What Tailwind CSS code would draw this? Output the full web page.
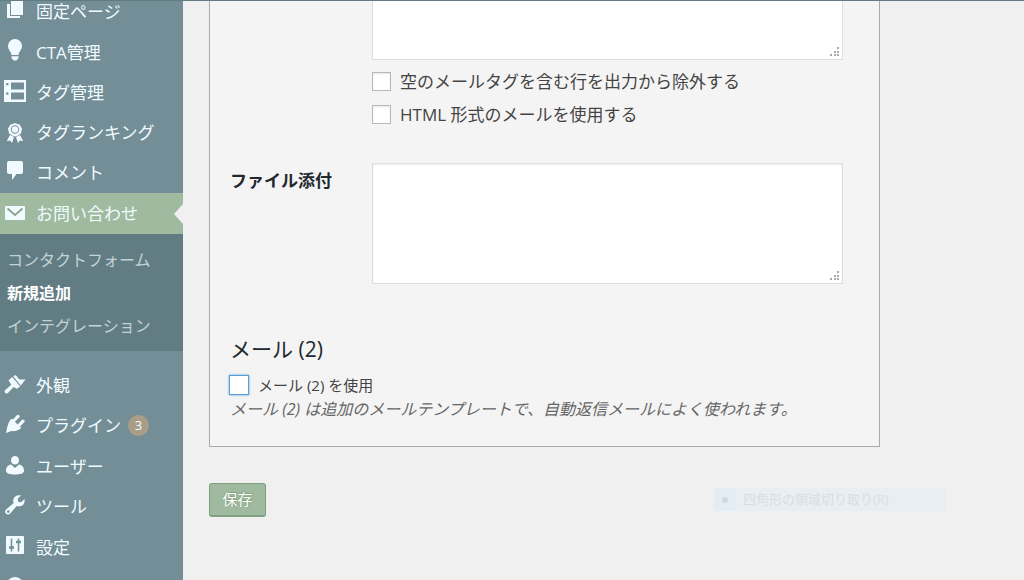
<!DOCTYPE html>
<html lang="ja">
<head>
  <meta charset="UTF-8">
  <meta name="viewport" content="width=device-width, initial-scale=1.0">
  <title>コンタクトフォーム - 新規追加</title>
  <script src="https://cdn.jsdelivr.net/npm/@tailwindcss/browser@4"></script>
</head>
<body class="bg-[#f0f0f0] h-screen overflow-hidden flex flex-col text-[17px] text-[#444] font-['Open_Sans','Noto_Sans_CJK_JP',sans-serif]">
  <header class="h-px shrink-0 bg-[#627c83]"></header>
  <div class="flex flex-1 min-h-0">

    <!-- Admin menu -->
    <nav class="w-[183px] shrink-0 bg-[#738e96] text-[#f1fbff] overflow-hidden">
      <div class="-mt-[9px] h-[201px] flex flex-col">
        <a href="#" class="flex-1 flex items-center gap-[11px] pl-[5px]">
          <svg class="size-5 -mt-1" viewBox="0 0 20 20" fill="currentColor"><path d="M6 1h12v14H6zM2 4h3v12h10v2H2z"/></svg>
          <span>固定ページ</span>
        </a>
        <a href="#" class="flex-1 flex items-center gap-[11px] pl-[5px]">
          <svg class="size-[22px] -mx-px -mt-1" viewBox="0 0 20 22" fill="currentColor"><path d="M10 0a7 7 0 0 1 7 7c0 3.600-3 5.500-3.500 9h-7C6 12.500 3 10.600 3 7a7 7 0 0 1 7-7zM6.500 17.200h7V19l-2 2.600h-3l-2-2.600z"/></svg>
          <span>CTA管理</span>
        </a>
        <a href="#" class="flex-1 flex items-center gap-[10px] pl-1">
          <svg class="size-[22px] -mt-1" viewBox="0 0 22 22"><path fill="currentColor" fill-rule="evenodd" d="M0 0h22v22H0zM7 2.500v7h13v-7zM7 12.500v7h13v-7zM2.200 3v2.200h2.200V3zM2.200 12.500v2.200h2.200v-2.200z"/></svg>
          <span>タグ管理</span>
        </a>
        <a href="#" class="flex-1 flex items-center gap-[11px] pl-[5px]">
          <svg class="size-5" viewBox="0 0 20 20" fill="currentColor"><path fill-rule="evenodd" d="M10 0l2.200 1 2.400.4 1 2.200 1.400 2-.5 2.400-.5 2.400-2 1.300-2 1.300-2 .6-2-.6-2-1.300-2-1.300L3.500 8 3 5.600l1.400-2 1-2.200L7.800 1zM10 2.300a4.200 4.200 0 1 0 0 8.400 4.200 4.200 0 0 0 0-8.400z"/><circle cx="10" cy="6.500" r="3.200"/><path d="M5 12l4 2-2 6-2-2.500-3.300.8zM15 12l-4 2 2 6 2-2.500 3.300.8z"/></svg>
          <span>タグランキング</span>
        </a>
        <a href="#" class="flex-1 flex items-center gap-[11px] pl-[5px]">
          <svg class="size-5 -mt-1" viewBox="0 0 20 20" fill="currentColor"><path d="M4 0h12a2 2 0 0 1 2 2v9a2 2 0 0 1-2 2h-4.500L7 19v-6H4a2 2 0 0 1-2-2V2a2 2 0 0 1 2-2z"/></svg>
          <span>コメント</span>
        </a>
      </div>

      <a href="#" class="relative h-[41px] bg-[#9fba9f] flex items-center gap-[11px] pl-[5px]">
        <svg class="size-5" viewBox="0 0 20 20"><path fill="currentColor" d="M1 2h18a1 1 0 0 1 1 1v12a1 1 0 0 1-1 1H1a1 1 0 0 1-1-1V3a1 1 0 0 1 1-1z"/><path fill="none" stroke="#8aa78d" stroke-width="2" d="M2.500 4.500L10 11l7.500-6.500"/></svg>
        <span>お問い合わせ</span>
        <span class="absolute right-0 top-[11px] border-y-[10px] border-y-transparent border-r-[9px] border-r-[#f0f0f0]"></span>
      </a>
      <div class="bg-[#627c83] py-[9px] pl-[7px] text-base text-[#c3d2d7]">
        <a href="#" class="h-[33px] flex items-center">コンタクトフォーム</a>
        <a href="#" class="h-[33px] flex items-center font-bold text-white">新規追加</a>
        <a href="#" class="h-[33px] flex items-center">インテグレーション</a>
      </div>

      <div class="mt-[14px] h-[243px] flex flex-col">
        <a href="#" class="flex-1 flex items-center gap-[10px] pl-1">
          <svg class="size-[22px]" viewBox="0 0 22 22" fill="currentColor"><path d="M9.300 2.200c1-1 2.400-1.300 3.400-.3.800 1 1.300 2.500 2.600 3.300 1.600.8 4.200 0 6.500.3-2 1.500-3 4-5.200 6z"/><path d="M4.500 6.200L8.200 3l8 9.500-3.400 2.300-3.200-1.800-5.400 5.700c-1.600 1.600-4.400.2-3.400-2.200L7.300 10.700z"/></svg>
          <span>外観</span>
        </a>
        <a href="#" class="flex-1 flex items-center gap-[11px] pl-[5px]">
          <svg class="size-5 -mt-1" viewBox="0 0 20 20" fill="currentColor"><path d="M6.500 4.500L16.300 14l-2.300 1.600c-2.500 1.400-4.700 1.800-7.500 1.400L1 19l1-5c.9-3.300 1.800-6.800 4.500-9.500z"/><path stroke="currentColor" stroke-width="3.200" stroke-linecap="round" d="M9.500 6L13 2.400M14.500 10.800L18 7.200"/></svg>
          <span>プラグイン</span>
          <span class="-ml-1 size-[21px] rounded-full bg-[#aa9d88] text-[13px] flex items-center justify-center">3</span>
        </a>
        <a href="#" class="flex-1 flex items-center gap-[11px] pl-[5px]">
          <svg class="size-5" viewBox="0 0 20 20" fill="currentColor"><ellipse cx="10" cy="4.300" rx="4" ry="4.300"/><path d="M6 8.500l4 3.500 4-3.500c3 .5 5 2.500 5 6.500 0 2.500-4 3.500-9 3.500S1 17.500 1 15c0-4 2-6 5-6.500z"/></svg>
          <span>ユーザー</span>
        </a>
        <a href="#" class="flex-1 flex items-center gap-[11px] pl-[5px]">
          <svg class="size-5 -mt-1" viewBox="0 0 20 20" fill="currentColor"><path fill-rule="evenodd" d="M16 .5l-3.300 3.300.5 3 3 .5L19.400 4c.9 3.500-.9 6.800-4.400 7.300-1.200.2-2.200 0-3.200-.4l-6.600 7.500c-1.200 1.300-3 1.400-4.200.3s-1.200-3 .1-4.200l7.600-6.400c-.5-1-.7-2-.5-3.200C8.700 1.500 12.200-.4 16 .5zM3.300 15.300a1.300 1.300 0 1 0 0 2.600 1.300 1.300 0 0 0 0-2.600z"/></svg>
          <span>ツール</span>
        </a>
        <a href="#" class="flex-1 flex items-center gap-[11px] pl-[5px]">
          <svg class="size-5 -mt-1" viewBox="0 0 20 20"><rect x="1" y="1" width="18" height="18" rx="1" fill="currentColor"/><path stroke="#738e96" stroke-width="1.500" d="M6.500 3.500v13M13.500 3.500v13"/><path stroke="#738e96" stroke-width="2.500" d="M4 12.500h5M11 7h5"/></svg>
          <span>設定</span>
        </a>
        <a href="#" aria-label="メニューを閉じる" class="flex-1 flex items-center pl-[5px]">
          <svg class="size-5 -mt-1" viewBox="0 0 20 20"><circle cx="10" cy="10" r="9" fill="currentColor"/><path fill="#738e96" d="M7.500 6l6 4-6 4z"/></svg>
        </a>
      </div>
    </nav>

    <!-- Mail tab -->
    <main class="flex-1 min-w-0 pl-[26px] pr-36">
      <form>
        <div class="bg-[#f4f4f4] border border-t-0 border-[#aaa] pl-5 pr-9 pb-[25px]">
          <div class="grid grid-cols-[142px_1fr]">
            <div></div>
            <div>
              <div class="relative">
                <textarea aria-label="メッセージ本文" class="block w-full h-[59px] resize-none bg-white border border-t-0 border-[#ddd] p-1"></textarea>
                <svg class="absolute right-[3px] bottom-[3px] size-[10px]" viewBox="0 0 10 10" fill="#aaa"><path d="M7 0h2v2H7zM4 4h2v2H4zM7 4h2v2H7zM0 7h2v2H0zM4 7h2v2H4zM7 7h2v2H7z"/></svg>
              </div>
              <label class="mt-[5px] h-[33px] flex items-center gap-[9px] whitespace-nowrap">
                <input type="checkbox" class="appearance-none size-[19px] shrink-0 bg-white border border-[#b4b9be] shadow-[inset_0_1px_2px_rgba(0,0,0,0.1)]">
                <span>空のメールタグを含む行を出力から除外する</span>
              </label>
              <label class="h-[33px] flex items-center gap-[9px] whitespace-nowrap">
                <input type="checkbox" class="appearance-none size-[19px] shrink-0 bg-white border border-[#b4b9be] shadow-[inset_0_1px_2px_rgba(0,0,0,0.1)]">
                <span>HTML 形式のメールを使用する</span>
              </label>
            </div>
          </div>

          <div class="mt-8 grid grid-cols-[142px_1fr]">
            <label for="attachments" class="mt-[5px] font-bold text-[#23282d]">ファイル添付</label>
            <div class="relative">
              <textarea id="attachments" class="block w-full h-[121px] resize-none bg-white border border-[#ddd] p-1 shadow-[inset_0_1px_2px_rgba(0,0,0,0.07)]"></textarea>
              <svg class="absolute right-[3px] bottom-[3px] size-[10px]" viewBox="0 0 10 10" fill="#aaa"><path d="M7 0h2v2H7zM4 4h2v2H4zM7 4h2v2H7zM0 7h2v2H0zM4 7h2v2H4zM7 7h2v2H7z"/></svg>
            </div>
          </div>

          <h2 class="mt-[50px] leading-[30px] text-[21px] text-[#23282d]">メール (2)</h2>
          <label class="mt-[9px] h-6 flex items-center gap-[9px] text-[15px]">
            <input type="checkbox" class="appearance-none size-5 -ml-px shrink-0 bg-white border border-[#5b9dd9] shadow-[0_0_2px_rgba(30,140,190,0.8)]">
            <span>メール (2) を使用</span>
          </label>
          <p class="leading-6 text-base italic text-[#666] whitespace-nowrap">メール (2) は追加のメールテンプレートで、自動返信メールによく使われます。</p>
        </div>
        <button type="button" class="mt-9 h-[34px] w-[57px] rounded-[3px] bg-[#9fba9f] border border-[#80a180] border-b-2 text-[15px] text-white [text-shadow:0_-1px_1px_#80a180,1px_0_1px_#80a180]">保存</button>
      </form>
    </main>
  </div>

  <!-- Fading menu entry -->
  <div class="absolute left-[714px] top-[488px] w-[232px] h-[23px] flex items-center bg-[#e8eef2] text-[13px] text-[#d9dee1]">
    <span class="w-[22px] h-full flex items-center justify-center bg-[#e4ecf4]"><span class="size-[6px] rounded-full bg-[#d2d9e0]"></span></span>
    <span class="pl-[7px] whitespace-nowrap">四角形の領域切り取り(R)</span>
  </div>
</body>
</html>
